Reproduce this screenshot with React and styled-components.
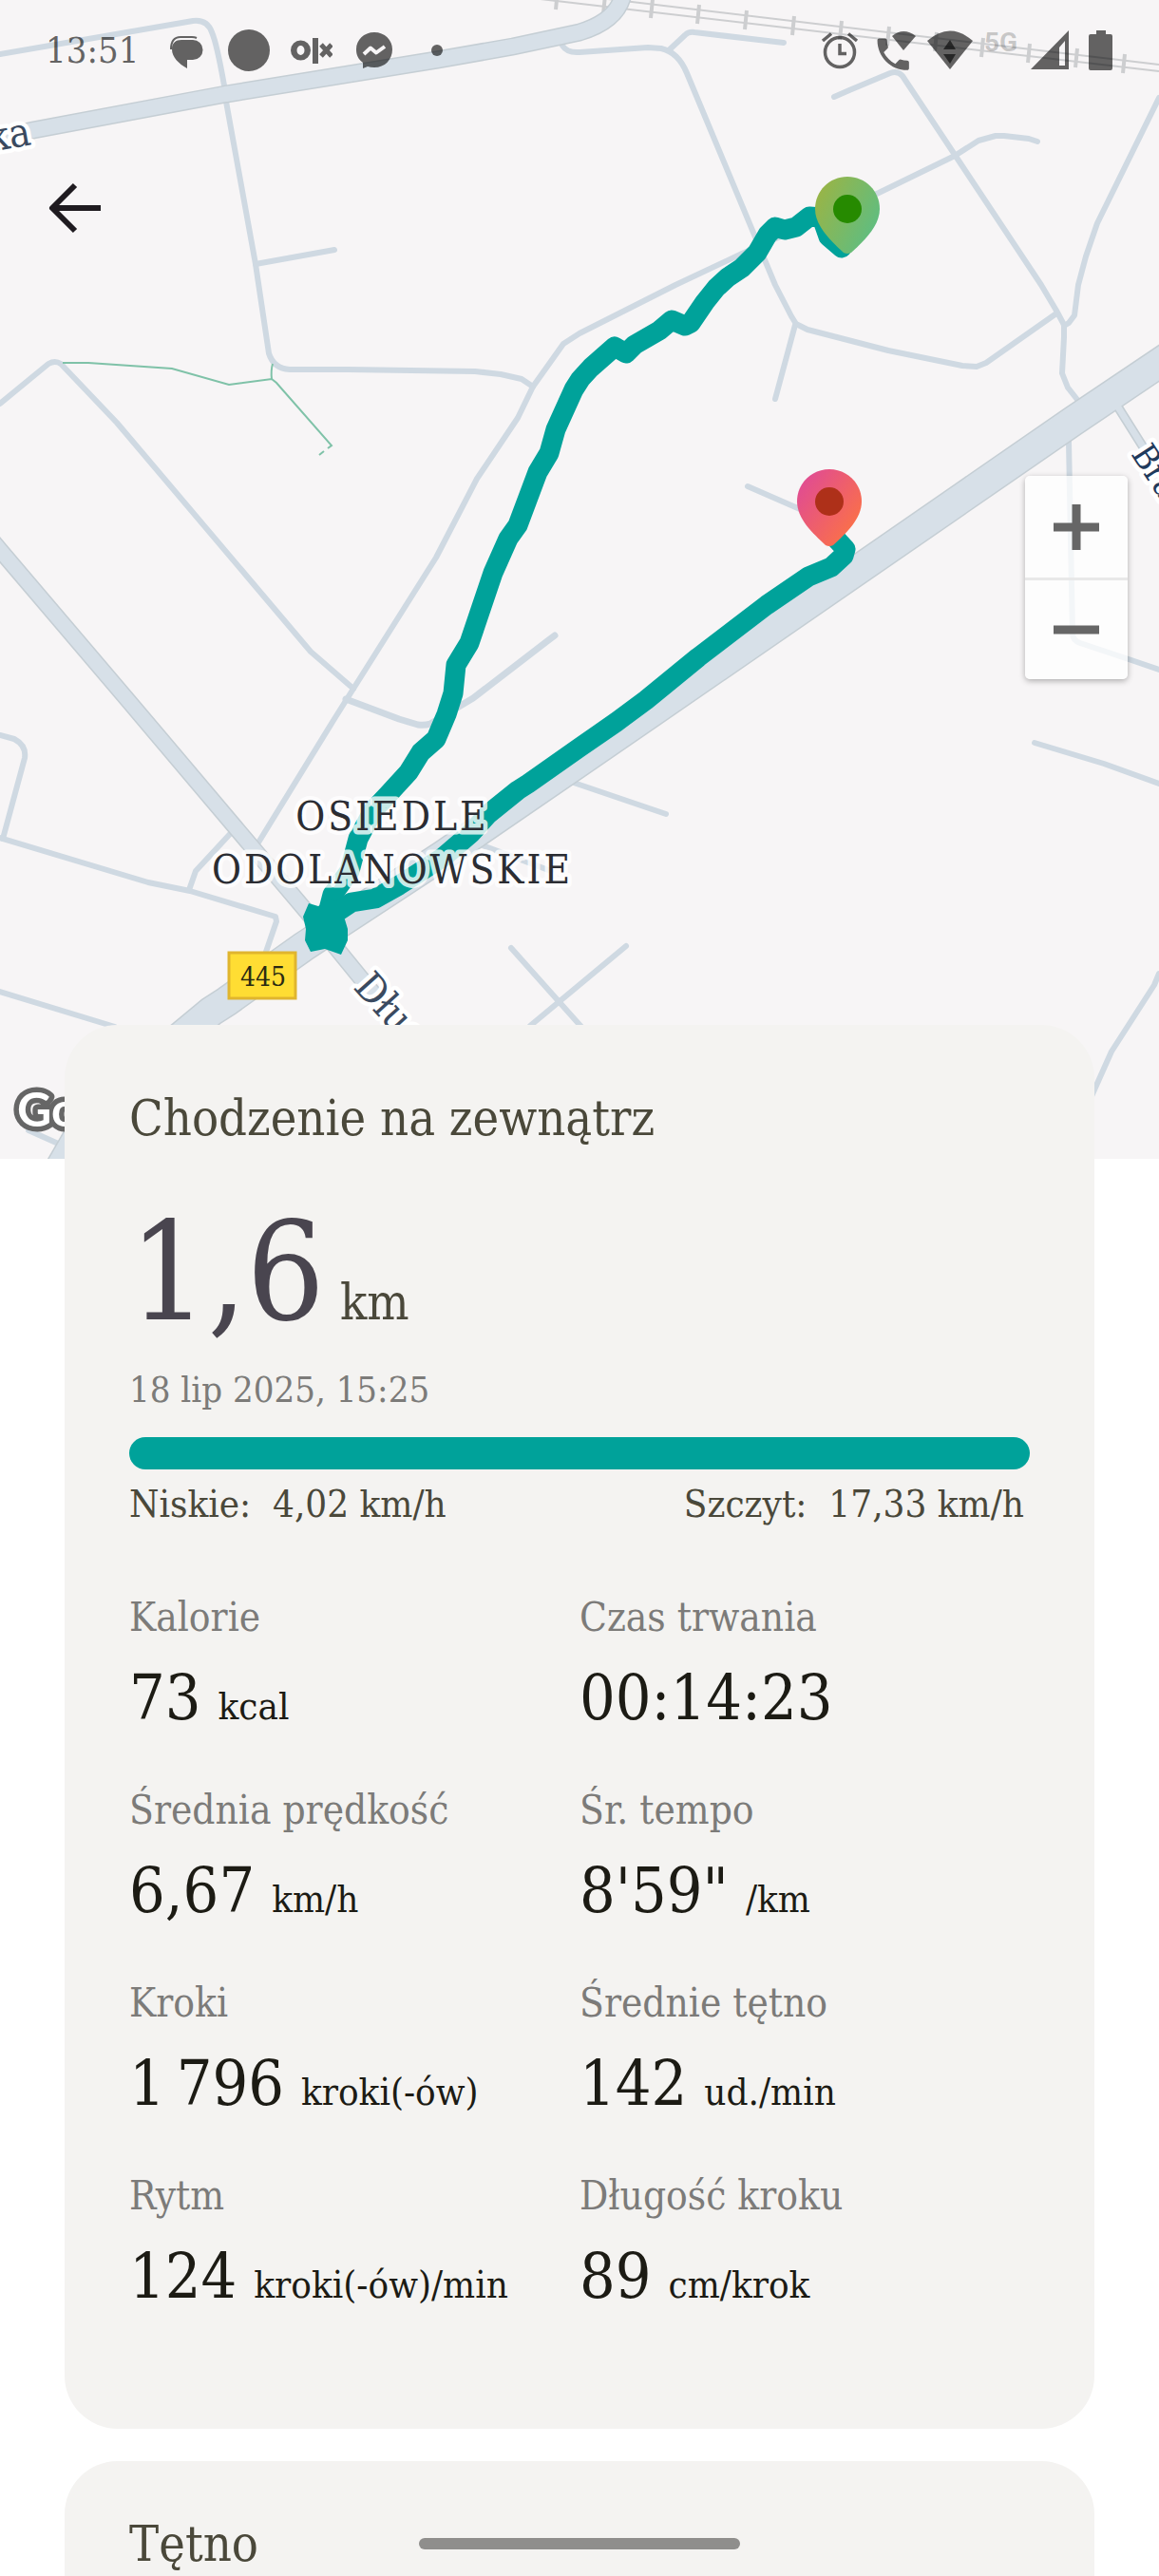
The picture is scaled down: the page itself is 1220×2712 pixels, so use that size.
import React from 'react'
import styled, { createGlobalStyle } from 'styled-components'

const SLAB = "'Roboto Slab', 'DejaVu Serif Condensed', 'DejaVu Serif', serif"

const GlobalStyle = createGlobalStyle`
  * {
    box-sizing: border-box;
  }

  body {
    margin: 0;
    background-color: white;
    font-family: ${SLAB};
  }

  h1, h2, p, dl, dt, dd {
    margin: 0;
    font-weight: 400;
  }
`

const Page = styled.div`
  position: relative;
  display: flex;
  flex-direction: column;
  min-height: 100vh;
`

const StatusBar = styled.header`
  position: absolute;
  top: 0;
  left: 0;
  right: 0;
  display: flex;
  align-items: center;
  justify-content: space-between;
  padding: 31px 38px 0 48px;
`

const Clock = styled.div`
  width: 104px;
  font-size: 38px;
  line-height: 44px;
  color: rgba(0, 0, 0, 0.6);
`

const StatusGroup = styled.div`
  display: flex;
  align-items: center;
  gap: ${({ $gap }) => $gap}px;
`

const StatusIcon = styled.svg`
  display: block;
  height: 44px;
  fill: rgba(0, 0, 0, 0.6);
`

const Network = styled.span`
  width: 36px;
  height: 44px;
  font-family: Roboto, sans-serif;
  font-size: 28px;
  font-weight: 700;
  line-height: 28px;
  color: rgba(0, 0, 0, 0.2);
`

const MapSection = styled.section`
  position: relative;
  background-color: #f7f5f6;
`

const MapDrawing = styled.svg`
  display: block;
  width: 100%;
  height: auto;
`

const BackButton = styled.button`
  position: absolute;
  top: 187px;
  left: 46px;
  padding: 0;
  border: none;
  background: none;
  cursor: pointer;

  svg {
    display: block;
  }
`

const ZoomControls = styled.div`
  position: absolute;
  top: 501px;
  right: 33px;
  width: 108px;
  border-radius: 5px;
  background-color: rgba(255, 255, 255, 0.75);
  box-shadow: 0 2px 6px rgba(0, 0, 0, 0.3);
`

const ZoomButton = styled.button`
  display: flex;
  align-items: center;
  justify-content: center;
  width: 100%;
  height: 107px;
  padding: 0;
  border: none;
  background: none;
  cursor: pointer;

  & + & {
    border-top: 3px solid #e8e8e8;
  }
`

const Content = styled.main`
  position: relative;
  display: flex;
  flex: 1;
  flex-direction: column;
  gap: 34px;
  margin-top: -141px;
  padding: 0 68px;
`

const Card = styled.section`
  padding: 68px 68px 120px;
  border-radius: 56px;
  background-color: #f4f3f1;
`

const LastCard = styled(Card)`
  flex: 1;
  padding: 57px 68px 0;
  border-radius: 56px 56px 0 0;
`

const Title = styled.h1`
  font-size: 52px;
  line-height: 60px;
  color: #4a483a;
`

const Distance = styled.p`
  display: flex;
  align-items: baseline;
  gap: 16px;
  margin-top: 52px;
  font-size: 144px;
  line-height: 160px;
  color: #49454f;
`

const DistanceUnit = styled.span`
  font-size: 52px;
  line-height: 60px;
  color: #4a483a;
`

const DateText = styled.p`
  margin-top: 20px;
  font-size: 38px;
  line-height: 48px;
  color: #7c7b79;
`

const SpeedBar = styled.div`
  height: 34px;
  margin: 26px 0 12px;
  border-radius: 17px;
  background-color: #00a29a;
`

const SpeedRange = styled.div`
  display: flex;
  justify-content: space-between;
  padding-right: 6px;
  font-size: 40px;
  line-height: 48px;
  color: #4a483a;
  white-space: pre;
`

const Stats = styled.dl`
  display: grid;
  grid-template-columns: 1fr 1fr;
  row-gap: 54px;
  margin-top: 72px;
`

const StatLabel = styled.dt`
  margin-bottom: 21px;
  font-size: 42px;
  line-height: 48px;
  color: #7c7b79;
`

const StatValue = styled.dd`
  display: flex;
  align-items: baseline;
  gap: 18px;
  font-size: 66px;
  line-height: 80px;
  color: #1c1b14;
  white-space: nowrap;
`

const StatUnit = styled.span`
  font-size: 40px;
  line-height: 48px;
`

const HomeIndicator = styled.div`
  position: fixed;
  bottom: 28px;
  left: 50%;
  width: 338px;
  height: 12px;
  border-radius: 6px;
  background-color: #8f8e8c;
  transform: translateX(-50%);
`

const stats = [
  { label: 'Kalorie', value: '73', unit: 'kcal' },
  { label: 'Czas trwania', value: '00:14:23' },
  { label: 'Średnia prędkość', value: '6,67', unit: 'km/h' },
  { label: 'Śr. tempo', value: '8\'59"', unit: '/km' },
  { label: 'Kroki', value: '1\u202f796', unit: 'kroki(-ów)' },
  { label: 'Średnie tętno', value: '142', unit: 'ud./min' },
  { label: 'Rytm', value: '124', unit: 'kroki(-ów)/min' },
  { label: 'Długość kroku', value: '89', unit: 'cm/krok' },
]

const streets = [
  'M0 57 L203 22 Q218 20 223 34 Q228 45 236 90 L238 107 L269 278 L283 372 Q288 388 305 389 L366 389 L500 391 L527 394 L549 399 L561 407',
  'M269 278 L352 263',
  'M0 425 L51 383 Q58 379 64 383 L123 445 L327 686 L372 725',
  'M1092 149 L1083 146 L1057 143 H1048 L1030 148 L1005 164 L925 203 L781 267 L711 300 L610 351 L593 362 L561 407 L545 440 L502 504 L459 587 L372 725 L350 760 L272 887',
  'M0 774 L15 778 Q28 785 26 798 L3 883',
  'M0 882 L156 929 L200 938 L290 965 L291 970 L280 1002',
  'M243 877 L206 917 L199 937',
  'M0 1044 L121 1081',
  'M538 998 L620 1090',
  'M558 1080 L659 996',
  'M1089 782 L1162 804 L1220 825',
  'M1220 1025 L1215 1037 L1170 1107 L1145 1163',
  'M30 1190 L68 1207',
  'M601 823 L701 857',
  'M508 890 L580 917',
  'M592 48 Q597 56 610 55 L682 50 L696 51 Q714 55 723 77 L816 300 L833 333 L838 341 L850 347 L935 369 L1013 385 L1028 386 L1038 382 L1112 330',
  'M705 52 L721 37 Q725 33 731 34 L825 45',
  'M837 342 L816 420',
  'M878 102 L894 95 L937 77 Q945 74 950 80 L1096 300 L1112 327 L1120 342 V355 L1118 393 L1124 408 L1135 422',
  'M1220 103 L1155 235 L1143 270 L1135 300 L1131 332 L1125 340 L1120 343',
  'M1125 465 L1129 667 Q1129 674 1137 677 L1188 694 L1220 705',
  'M787 512 L842 536',
]

const mainRoads = [
  { d: 'M-10 147 L35 137 L238 99 L460 63 L540 49 L610 34 Q650 22 656 -6', width: 18 },
  { d: 'M-10 567 L0 579 L137 740 L323 960 L420 1079', width: 17 },
  { d: 'M1174 424 L1201 467 L1230 512', width: 9 },
  { d: 'M54 1230 L80 1185', width: 16 },
  { d: 'M1240 369 L1130 443 L900 602 L610 802 L467 900 L319 997 L239 1054 L222 1065 L180 1100', width: 32 },
]

const railTicks = [
  [586, 0], [636, 5], [686, 9], [735, 15], [785, 21], [835, 27], [885, 32],
  [935, 38], [985, 44], [1034, 50], [1083, 56], [1133, 61], [1183, 67],
]

const routeOut =
  'M886 261 L872 249 L865 229 L852 228 L838 239 L826 242 L816 239 L808 247 L797 266 L781 282 L766 292 L754 303 L742 318 L727 340 L721 343 L707 337 L694 348 L668 363 L659 372 L647 365 L622 387 L611 399 L604 410 L585 452 L578 477 L566 497 L545 553 L535 567 L519 603 L494 677 L480 700 L477 730 L470 752 L459 778 L443 792 L430 813 L408 837 L393 853 L377 883 L368 917 L350 942 L344 965'
const routeBack =
  'M344 975 L352 962 L370 950 L395 946 L420 932 L467 902 L496 877 L514 857 L545 832 L556 825 L610 787 L649 760 L680 737 L735 692 L807 637 L851 607 L875 597 L888 585 L890 578 L878 565'

const Pin = ({ x, y, fill, dot }) => (
  <g transform={`translate(${x} ${y})`}>
    <path
      d="M0 -34 C19 -34 34 -19 34 0 C34 18 18 33 4 46 Q0 48 -4 46 C-18 33 -34 18 -34 0 C-34 -19 -19 -34 0 -34 Z"
      fill={fill}
    />
    <circle r="15" fill={dot} />
  </g>
)

const RouteMap = () => (
  <MapDrawing viewBox="0 0 1220 1220" role="img" aria-label="Mapa trasy">
    <defs>
      <linearGradient id="startPin" x1="0" y1="0.2" x2="1" y2="0.8">
        <stop offset="0" stopColor="#9ab445" />
        <stop offset="1" stopColor="#5abe86" />
      </linearGradient>
      <linearGradient id="endPin" x1="0.1" y1="0.2" x2="0.8" y2="0.8">
        <stop offset="0" stopColor="#e24e8e" />
        <stop offset="1" stopColor="#f96e4d" />
      </linearGradient>
    </defs>
    <rect width="1220" height="1220" fill="#f7f5f6" />

    <g fill="none" stroke="#cdced0" strokeWidth="2">
      <path d="M560 -2 L1220 75 M640 -1 L1220 68" />
      {railTicks.map(([x, y]) => (
        <path key={x} d={`M${x + 1} ${y - 10} L${x - 1} ${y + 10}`} strokeWidth="4" />
      ))}
    </g>

    <g fill="none" stroke="#cfd9e2" strokeWidth="6" strokeLinecap="round" strokeLinejoin="round">
      {streets.map((d) => (
        <path key={d} d={d} />
      ))}
      <path
        d="M364 736 L420 757 L440 763 Q447 764 453 762 L498 735 L576 675 L584 669"
        strokeWidth="7"
      />
    </g>

    <g fill="none" stroke="#7fc2a8" strokeWidth="2">
      <path d="M66 382 H93 L181 388 L241 405 L286 399 L291 403 L349 469 L345 472 M341 475 L336 479" />
      <path d="M287 383 Q285 390 286 399" />
    </g>

    <g fill="none">
      {mainRoads.map(({ d, width }) => (
        <path key={d} d={d} stroke="#c5ced4" strokeWidth={width + 1} />
      ))}
      {mainRoads.map(({ d, width }) => (
        <path key={d} d={d} stroke="#d7e0e8" strokeWidth={width - 2} />
      ))}
    </g>

    <g fill="none" stroke="#00a29a" strokeWidth="21" strokeLinecap="round" strokeLinejoin="round">
      <path d={routeOut} />
      <path d={routeBack} />
    </g>
    <path
      d="M325 951 L335 954 L350 945 L363 968 L366 978 L366 990 L359 1005 L342 999 L327 1002 L321 990 L322 978 L319 965 Z"
      fill="#00a29a"
    />

    <Pin x={892} y={220} fill="url(#startPin)" dot="#268a00" />
    <Pin x={873} y={528} fill="url(#endPin)" dot="#ae3019" />

    <rect x="241" y="1003" width="70" height="48" fill="#ffdd33" stroke="#e0b52e" strokeWidth="3" />
    <g fontFamily={SLAB}>
      <text x="277" y="1038" fontSize="28" textAnchor="middle" fill="#2a2a12">445</text>
      <g stroke="white" strokeWidth="9" strokeLinejoin="round" paintOrder="stroke">
        <g fill="#3a4a60">
          <text transform="translate(34 152) rotate(-10)" fontSize="42" textAnchor="end">ka</text>
          <text transform="translate(371 1040) rotate(48)" fontSize="42">Dług</text>
          <text transform="translate(1190 478) rotate(57)" fontSize="36" fill="#1f3a5c">Bra</text>
        </g>
        <g
          fontSize="42"
          letterSpacing="3"
          textAnchor="middle"
          fill="#2b2d33"
          stroke="rgba(255, 255, 255, 0.8)"
        >
          <text x="413" y="874">OSIEDLE</text>
          <text x="413" y="930">ODOLANOWSKIE</text>
        </g>
      </g>
    </g>
    <text
      x="18"
      y="1186"
      fontFamily="Lato, sans-serif"
      fontSize="50"
      fontWeight="700"
      fill="white"
      stroke="#666666"
      strokeWidth="11"
      strokeLinejoin="round"
      paintOrder="stroke"
    >
      Go
    </text>
  </MapDrawing>
)

const Notifications = () => (
  <StatusGroup $gap={22}>
    <Clock>13:51</Clock>
    <StatusIcon width="44" viewBox="0 0 44 44">
      <path d="M17 11 H29 A10 10 0 0 1 29 32 H23 V41 C14 36 7 29 7 21 C7 14 11 11 17 11 Z" />
      <path
        d="M6 21 C6 12 9 8 16 8 H28 Q31 8 33 9"
        fill="none"
        stroke="rgba(0, 0, 0, 0.6)"
        strokeWidth="2"
      />
    </StatusIcon>
    <StatusIcon width="44" viewBox="0 0 44 44">
      <circle cx="22" cy="22" r="22" />
    </StatusIcon>
    <StatusIcon width="44" viewBox="0 0 44 44">
      <path
        fillRule="evenodd"
        d="M10.5 11.5 a10.5 10.5 0 0 1 0 21 a10.5 10.5 0 0 1 0 -21 Z M10.5 17 a4 5 0 0 0 0 10 a4 5 0 0 0 0 -10 Z"
      />
      <rect x="23" y="9" width="6" height="27" />
      <path d="M32 16 L43 28 M43 16 L32 28" stroke="rgba(0, 0, 0, 0.6)" strokeWidth="5" />
    </StatusIcon>
    <StatusIcon width="44" viewBox="0 0 44 44">
      <path d="M22 3 C33 3 41 11 41 21 C41 32 33 40 22 40 Q18 40 15 39 L10 41 V35 C5 31 3 27 3 21 C3 11 11 3 22 3 Z" />
      <path
        d="M11 26 L18 19.5 L24 24.5 L33 18"
        fill="none"
        stroke="#f7f5f6"
        strokeWidth="4"
        strokeLinejoin="round"
      />
    </StatusIcon>
    <StatusIcon width="44" viewBox="0 0 44 44">
      <circle cx="22" cy="22" r="6" />
    </StatusIcon>
  </StatusGroup>
)

const SystemIcons = () => (
  <StatusGroup $gap={12}>
    <StatusIcon width="48" viewBox="0 0 48 44">
      <g fill="none" stroke="rgba(0, 0, 0, 0.6)" strokeWidth="3.5">
        <circle cx="24" cy="24" r="15.5" />
        <path d="M6 12 L15 4.5 M33 4.5 L42 12 M24 15 V25.5 H31" />
      </g>
    </StatusIcon>
    <StatusIcon width="44" viewBox="0 0 44 44">
      <path
        transform="translate(-2 4) scale(1.85)"
        d="M6.62 10.79c1.44 2.83 3.76 5.14 6.59 6.59l2.2-2.2c.27-.27.67-.36 1.02-.24 1.12.37 2.33.57 3.57.57.55 0 1 .45 1 1V20c0 .55-.45 1-1 1-9.39 0-17-7.61-17-17 0-.55.45-1 1-1h3.5c.55 0 1 .45 1 1 0 1.25.2 2.45.57 3.57.11.35.03.74-.25 1.02l-2.2 2.2z"
      />
      <path d="M19 7 Q31 -3 44 7 L31 22 Z" />
    </StatusIcon>
    <StatusIcon width="48" viewBox="0 0 48 44">
      <path d="M0 12 Q24 -9 48 12 L24 42 Z" />
      <path d="M17 21 L24 11 L30 21 Z M17 26 H30 L24 36 Z" />
    </StatusIcon>
    <Network>5G</Network>
    <StatusIcon width="42" viewBox="0 0 42 44">
      <path fillRule="evenodd" d="M1 42 L41 1 V42 Z M31 19 V38 H37 V12 Z" />
    </StatusIcon>
    <StatusIcon width="44" viewBox="0 0 44 44">
      <path d="M16 1 H26 V5 H31 Q33 5 33 7 V41 Q33 43 31 43 H10 Q8 43 8 41 V7 Q8 5 10 5 H16 Z" />
    </StatusIcon>
  </StatusGroup>
)

const App = () => {
  return (
    <Page>
      <GlobalStyle />
      <MapSection>
        <RouteMap />
        <BackButton type="button" aria-label="Wstecz">
          <svg width="64" height="64" viewBox="0 0 64 64" fill="none" stroke="#1f1b20" strokeWidth="6">
            <path d="M60 32 H9 M33 8 L9 32 L33 56" strokeLinejoin="round" />
          </svg>
        </BackButton>
        <ZoomControls>
          <ZoomButton type="button" aria-label="Powiększ">
            <svg width="48" height="48" viewBox="0 0 48 48" stroke="#666666" strokeWidth="9">
              <path d="M0 24 H48 M24 0 V48" />
            </svg>
          </ZoomButton>
          <ZoomButton type="button" aria-label="Pomniejsz">
            <svg width="48" height="48" viewBox="0 0 48 48" stroke="#666666" strokeWidth="9">
              <path d="M0 24 H48" />
            </svg>
          </ZoomButton>
        </ZoomControls>
      </MapSection>
      <StatusBar>
        <Notifications />
        <SystemIcons />
      </StatusBar>
      <Content>
        <Card>
          <Title>Chodzenie na zewnątrz</Title>
          <Distance>
            1,6
            <DistanceUnit>km</DistanceUnit>
          </Distance>
          <DateText>18 lip 2025, 15:25</DateText>
          <SpeedBar />
          <SpeedRange>
            <span>{'Niskie:  4,02 km/h'}</span>
            <span>{'Szczyt:  17,33 km/h'}</span>
          </SpeedRange>
          <Stats>
            {stats.map(({ label, value, unit }) => (
              <div key={label}>
                <StatLabel>{label}</StatLabel>
                <StatValue>
                  {value}
                  {unit && <StatUnit>{unit}</StatUnit>}
                </StatValue>
              </div>
            ))}
          </Stats>
        </Card>
        <LastCard>
          <Title as="h2">Tętno</Title>
        </LastCard>
      </Content>
      <HomeIndicator />
    </Page>
  )
}

export default App
